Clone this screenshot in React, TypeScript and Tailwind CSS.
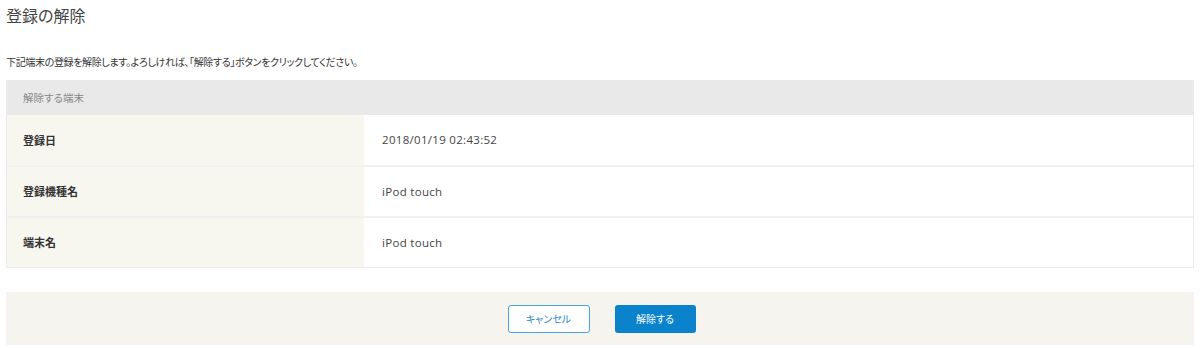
import React from "react";

const rows = [
  { label: "登録日", value: "2018/01/19 02:43:52" },
  { label: "登録機種名", value: "iPod touch" },
  { label: "端末名", value: "iPod touch" },
];

const App = () => {
  return (
    <div className="w-[1200px] h-[349px] bg-white px-[6px] font-['Noto_Sans_CJK_JP','Noto_Sans',sans-serif] text-[#333] overflow-hidden">
      <h1 className="pt-[5px] text-[16px] leading-[20px] text-[#444] [font-feature-settings:'palt']">登録の解除</h1>
      <p className="mt-[30px] text-[10px] leading-[14px] tracking-[-0.35px] text-[#333] [font-feature-settings:'palt']">
        下記端末の登録を解除します。よろしければ、「解除する」ボタンをクリックしてください。
      </p>
      <div className="mt-[11px] border-x border-b border-[#ebebeb]">
        <div className="h-[35px] bg-[#e9e9e9] flex items-center px-[16px] text-[10.5px] text-[#888] [font-feature-settings:'palt']">
          解除する端末
        </div>
        {rows.map((row, i) => (
          <div
            key={row.label}
            className={`flex ${i > 0 ? "h-[51px] border-t-2 border-[#f0f0f0]" : "h-[50px]"}`}
          >
            <div className="w-[357px] bg-[#f7f6ef] flex items-center px-[16px] text-[11px] font-bold text-[#333] [font-feature-settings:'palt']">
              {row.label}
            </div>
            <div className="flex-1 flex items-center px-[18px] font-['Open_Sans','Noto_Sans_CJK_JP',sans-serif] text-[11.5px] tracking-[0.3px] text-[#444]">
              {row.value}
            </div>
          </div>
        ))}
      </div>
      <div className="mt-[24px] h-[53px] bg-[#f5f4ee] flex items-center justify-center gap-[25px]">
        <button className="w-[82px] h-[28px] ml-[3px] rounded-[3px] border border-[#4aa3dc] bg-white text-[10px] text-[#2a87c8] [font-feature-settings:'palt']">
          キャンセル
        </button>
        <button className="w-[81px] h-[28px] rounded-[3px] bg-[#0a82cc] text-[10px] text-white [font-feature-settings:'palt']">
          解除する
        </button>
      </div>
    </div>
  );
};

export default App;
